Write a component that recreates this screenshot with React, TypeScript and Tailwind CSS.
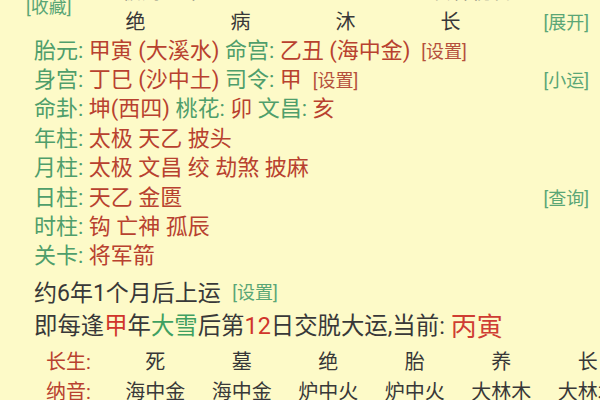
import type { ReactNode } from "react";

const green = "text-[#4f9e6b]";
const red = "text-[#b8412f]";

function G({ children }: { children: ReactNode }) {
  return <span className={green}>{children}</span>;
}

function R({ children }: { children: ReactNode }) {
  return <span className={red}>{children}</span>;
}

function Tag({ children, tone }: { children: ReactNode; tone: "green" | "red" }) {
  return (
    <span
      className={`text-[18px] ${tone === "green" ? "text-[#5aa676]" : "text-[#b5503c]"}`}
    >
      [{children}]
    </span>
  );
}

type InfoRowProps = {
  children: ReactNode;
  right?: ReactNode;
};

function InfoRow({ children, right }: InfoRowProps) {
  return (
    <div className="flex h-[29.4px] items-center whitespace-pre pl-[34px] pr-[11px] text-[22px] leading-none">
      <div>{children}</div>
      {right && <div className="ml-auto">{right}</div>}
    </div>
  );
}

const topCols = ["绝", "病", "沐", "长"];
const lifeCols = ["死", "墓", "绝", "胎", "养", "长"];
const soundCols = ["海中金", "海中金", "炉中火", "炉中火", "大林木", "大林木"];

export default function App() {
  return (
    <div className="h-[400px] w-[600px] overflow-hidden bg-[#fdfac8] font-['Roboto','Noto_Sans_CJK_SC',sans-serif] text-[#383838]">
      {/* row scrolled off the top */}
      <div className="-mt-[18px] flex h-[25px] items-start text-[20px] leading-[20px] text-[#8c8c80]">
        <span className="ml-[122px]">偏财正印</span>
        <span className="ml-auto mr-[88px]">食神伤官</span>
      </div>

      <div className="flex h-[29px] items-center text-[20px] leading-none">
        <div className="-mt-[11px] w-[83px] shrink-0 self-start pl-[26px] leading-[20px]">
          <Tag tone="green">收藏</Tag>
        </div>
        {topCols.map((c, i) => (
          <div key={i} className="w-[105px] shrink-0 text-center">
            {c}
          </div>
        ))}
        <div className="ml-auto pr-[11px] leading-none">
          <Tag tone="green">展开</Tag>
        </div>
      </div>

      <InfoRow>
        <G>胎元: </G>
        <R>甲寅 (大溪水) </R>
        <G>命宫: </G>
        <R>乙丑 (海中金)  </R>
        <Tag tone="red">设置</Tag>
      </InfoRow>
      <InfoRow right={<Tag tone="green">小运</Tag>}>
        <G>身宫: </G>
        <R>丁巳 (沙中土) </R>
        <G>司令: </G>
        <R>甲  </R>
        <Tag tone="red">设置</Tag>
      </InfoRow>
      <InfoRow>
        <G>命卦: </G>
        <R>坤(西四) </R>
        <G>桃花: </G>
        <R>卯 </R>
        <G>文昌: </G>
        <R>亥</R>
      </InfoRow>
      <InfoRow>
        <G>年柱: </G>
        <R>太极 天乙 披头</R>
      </InfoRow>
      <InfoRow>
        <G>月柱: </G>
        <R>太极 文昌 绞 劫煞 披麻</R>
      </InfoRow>
      <InfoRow right={<Tag tone="green">查询</Tag>}>
        <G>日柱: </G>
        <R>天乙 金匮</R>
      </InfoRow>
      <InfoRow>
        <G>时柱: </G>
        <R>钩 亡神 孤辰</R>
      </InfoRow>
      <InfoRow>
        <G>关卡: </G>
        <R>将军箭</R>
      </InfoRow>

      <div className="mt-[5px] flex h-[34px] items-center whitespace-pre pl-[34px] text-[23px] leading-none">
        约6年1个月后上运{"  "}
        <Tag tone="green">设置</Tag>
      </div>
      <div className="flex h-[34px] items-center whitespace-pre pl-[34px] text-[23.4px] leading-none">
        即每逢<span className="text-[#d0352b]">甲</span>年
        <span className="text-[#3fa061]">大雪</span>后第
        <span className="text-[#d0352b]">12</span>日交脱大运,当前:{" "}
        <span className="text-[26px] text-[#cf3d33]">丙寅</span>
      </div>

      <div className="mt-[3px] flex h-[30px] items-center text-[20px] leading-none">
        <div className={`w-[112px] shrink-0 pl-[46px] ${red}`}>长生:</div>
        {lifeCols.map((c, i) => (
          <div key={i} className="w-[86.5px] shrink-0 text-center">
            {c}
          </div>
        ))}
      </div>
      <div className="flex h-[30px] items-center text-[20px] leading-none">
        <div className={`w-[112px] shrink-0 pl-[46px] ${red}`}>纳音:</div>
        {soundCols.map((c, i) => (
          <div key={i} className="w-[86.5px] shrink-0 whitespace-nowrap text-center">
            {c}
          </div>
        ))}
      </div>
    </div>
  );
}
